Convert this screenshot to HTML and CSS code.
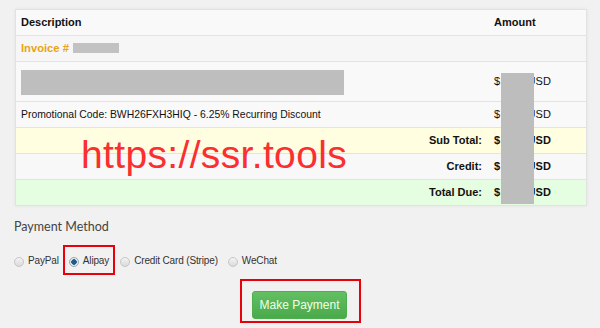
FILE: index.html
```html
<!DOCTYPE html>
<html>
<head>
<meta charset="utf-8">
<link rel="stylesheet" href="styles.css">
</head>
<body>
<div class="page">
  <div class="panel">
    <table class="invoice">
      <colgroup><col class="c-desc"><col class="c-amt"></colgroup>
      <tr class="head"><th>Description</th><th>Amount</th></tr>
      <tr class="inv"><td colspan="2" class="first"><span class="invno">Invoice #</span><span class="redact-inv"></span></td></tr>
      <tr class="item"><td><div class="redact-item"></div></td><td class="amt">$ &nbsp; &nbsp; &nbsp; &nbsp; USD</td></tr>
      <tr class="promo"><td>Promotional Code: BWH26FXH3HIQ - 6.25% Recurring Discount</td><td class="amt">$ &nbsp; &nbsp; &nbsp; &nbsp; USD</td></tr>
      <tr class="sub"><td class="lbl">Sub Total:</td><td class="amt bold">$ &nbsp; &nbsp; &nbsp; &nbsp; USD</td></tr>
      <tr class="credit"><td class="lbl">Credit:</td><td class="amt bold">$ &nbsp; &nbsp; &nbsp; &nbsp; USD</td></tr>
      <tr class="total"><td class="lbl">Total Due:</td><td class="amt bold">$ &nbsp; &nbsp; &nbsp; &nbsp; USD</td></tr>
    </table>
    <div class="redact-amt"></div>
    <div class="watermark">https://ssr.tools</div>
  </div>
  <h3 class="pm-title">Payment Method</h3>
  <div class="methods">
    <label class="opt paypal"><span class="radio"></span>PayPal</label>
    <label class="opt boxed"><span class="radio on"></span>Alipay</label>
    <label class="opt card"><span class="radio"></span>Credit Card (Stripe)</label>
    <label class="opt"><span class="radio"></span>WeChat</label>
  </div>
  <div class="submit-row">
    <div class="btn-box"><button class="btn">Make Payment</button></div>
  </div>
</div>
</body>
</html>
```
FILE: styles.css
```css
* { box-sizing: border-box; }
body {
  margin: 0;
  background: #f1f1f1;
  font-family: "Liberation Sans", Arial, sans-serif;
  color: #222;
}
.page {
  width: 600px;
  height: 328px;
  padding: 9px 14px 0 15px;
  overflow: hidden;
}
.panel {
  position: relative;
  width: 572px;
  border: 1px solid #e2e2e2;
  background: #fafafa;
  box-shadow: 0 0 4px rgba(0,0,0,0.06);
}
.invoice {
  width: 100%;
  border-collapse: collapse;
  table-layout: fixed;
  font-size: 10.4px;
}
.c-desc { width: 477px; }
.c-amt { width: 93px; }
.invoice th, .invoice td {
  text-align: left;
  padding: 0 0 0 5px;
  height: 26px;
  border-top: 1px solid #e3e3e3;
  color: #111;
}
.invoice th { height: 25px; border-top: none; font-weight: bold; font-size: 11px; }
.invoice th:last-child, .invoice td.amt { padding-left: 1px; font-size: 11px; }
.head { background: #f9f9f9; }
.inv { background: #f6f6f6; }
.invno { color: #e8a317; font-weight: bold; font-size: 11.2px; margin-right: 4px; }
.redact-inv {
  display: inline-block;
  width: 46px;
  height: 10px;
  background: #c2c2c2;
  vertical-align: -1px;
}
.item { background: #f9f9f9; }
.item td { height: 40px; }
.redact-item {
  width: 323px;
  height: 25px;
  background: #bebebe;
  margin-top: 2px;
}
.promo { background: #f9f9f9; }
.sub { background: #fffee0; }
.credit { background: #f8f8f8; }
.total { background: #e5fde0; }
.invoice td.lbl { text-align: right; font-weight: bold; padding-right: 11px; font-size: 11px; }
.bold { font-weight: bold; }
.redact-amt {
  position: absolute;
  left: 485px;
  top: 63px;
  width: 33px;
  height: 131px;
  background: #bdbdbd;
}
.watermark {
  position: absolute;
  left: 65px;
  top: 125px;
  font-family: "Liberation Sans", Arial, sans-serif;
  font-size: 39px;
  letter-spacing: 0.35px;
  color: #fb2f2f;
  line-height: 1;
}
.pm-title {
  margin: 13px 0 0 -1px;
  font-family: Lato, sans-serif;
  font-weight: normal;
  font-size: 12.5px;
  line-height: 16px;
  color: #444;
}
.methods {
  display: flex;
  align-items: center;
  margin-top: 10px;
  height: 30px;
}
.opt {
  display: flex;
  align-items: center;
  font-size: 10px;
  letter-spacing: -0.15px;
  color: #333;
  height: 30px;
}
.paypal { margin-left: -1px; margin-right: 4px; }
.boxed {
  border: 2px solid #e8000b;
  padding: 0 4px 0 4px;
  margin-right: 5px;
}
.card { margin-right: 10px; }
.radio {
  width: 10px;
  height: 10px;
  border-radius: 50%;
  border: 1px solid #c6c6c6;
  background: linear-gradient(#f4f4f4, #dadada);
  margin: 3px 4px 0 0;
}
.radio.on {
  background: radial-gradient(circle, #1e5a8a 0 2.5px, #e8e8e8 3px);
  border-color: #9aa;
}
.submit-row {
  display: flex;
  justify-content: center;
  margin-top: 4px;
  padding-left: 1px;
}
.btn-box {
  border: 2px solid #e8000b;
  width: 121px;
  height: 44px;
  padding: 10px 0 0 10px;
  margin-left: -1px;
}
.btn {
  width: 95px;
  height: 28px;
  border: 1px solid #4cae4c;
  border-radius: 3px;
  background: linear-gradient(#62c062, #4aa94a);
  color: #f3ffe8;
  font-family: "Liberation Sans", Arial, sans-serif;
  font-size: 12px;
  padding: 0;
}
```
